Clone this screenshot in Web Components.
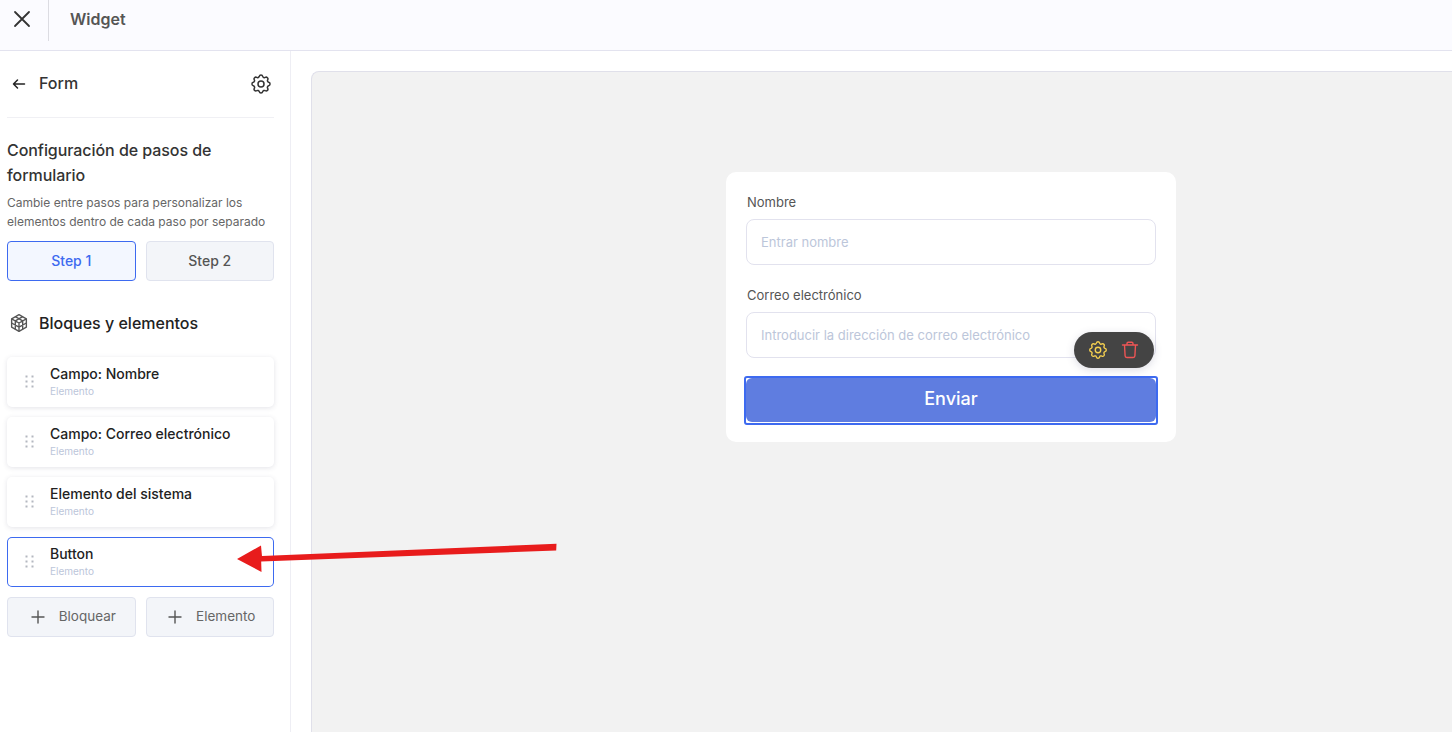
<!DOCTYPE html>
<html lang="es"><head><meta charset="utf-8"><title>Widget</title>
<style>
html,body{margin:0;height:100%;overflow:hidden;background:#fff;font-family:Inter,"Liberation Sans",sans-serif}
</style></head>
<body>
<app-shell></app-shell>
<script>
function def(name, html){
  customElements.define(name, class extends HTMLElement{
    constructor(){super();this.attachShadow({mode:'open'}).innerHTML=typeof html==='function'?html(this):html;}
  });
}
const GEAR='<path d="M10.3 4.3c.4-1.8 3-1.8 3.4 0a1.7 1.7 0 0 0 2.6 1.1c1.5-.9 3.3.8 2.4 2.4a1.7 1.7 0 0 0 1 2.5c1.8.4 1.8 3 0 3.4a1.7 1.7 0 0 0-1 2.6c.9 1.5-.9 3.3-2.4 2.4a1.7 1.7 0 0 0-2.6 1c-.4 1.8-3 1.8-3.4 0a1.7 1.7 0 0 0-2.6-1c-1.5.9-3.3-.9-2.4-2.4a1.7 1.7 0 0 0-1-2.6c-1.8-.4-1.8-3 0-3.4a1.7 1.7 0 0 0 1-2.5c-.9-1.6.9-3.3 2.4-2.4 1 .6 2.3.1 2.6-1.1z"/><circle cx="12" cy="12" r="3"/>';
def('top-bar',`<style>
:host{display:flex;align-items:stretch;height:50px;background:#fbfbff;border-bottom:1px solid #e3e3ef;box-sizing:content-box}
.x{width:48px;height:41px;border-right:1px solid #dcdce2;display:flex;align-items:center;justify-content:center;box-sizing:content-box}
.x svg{margin-top:-3px;margin-left:-4px}
.t{margin-left:21px;font-size:16px;font-weight:600;color:#555;line-height:39px}
</style><div class="x"><svg width="24" height="24" viewBox="0 0 24 24" fill="none" stroke="#333" stroke-width="1.8" stroke-linecap="round"><path d="M5 5l14 14M19 5L5 19"/></svg></div><div class="t">Widget</div>`);

def('form-head',`<style>
:host{display:flex;align-items:center;height:67px;padding-bottom:1px;border-bottom:1px solid #f0f0f4;box-sizing:border-box}
svg.a{margin-left:4px;margin-right:12px}
.t{flex:1;font-size:16px;font-weight:500;color:#333;margin-bottom:2px}
svg.g{margin-right:1px}
</style><svg class="a" width="16" height="16" viewBox="0 0 16 16" fill="none" stroke="#222" stroke-width="1.5" stroke-linecap="round" stroke-linejoin="round"><path d="M13.500 8h-11M6.500 4l-4 4 4 4"/></svg><span class="t">Form</span><svg class="g" width="24" height="24" viewBox="0 0 24 24" fill="none" stroke="#333" stroke-width="1.5">${GEAR}</svg>`);

def('side-button',el=>`<style>
:host{display:flex;align-items:center;justify-content:center;flex:1;height:40px;box-sizing:border-box;border-radius:4px;border:1px solid #e0e3ee;background:#f3f5f9;color:#555;font-size:14px;font-weight:500;padding-bottom:2px}
:host([active]){background:#f3f7ff;border-color:#3d6af0;color:#3d6af0}
:host([plain]){font-weight:400;color:#666;font-size:13.500px;padding-left:4px}
svg{margin-right:14px;margin-top:2px}
</style>${el.hasAttribute('plain')?'<svg width="14" height="14" viewBox="0 0 14 14" fill="none" stroke="#555" stroke-width="1.4" stroke-linecap="round"><path d="M7 1v12M1 7h12"/></svg>':''}<slot></slot>`);

def('element-card',`<style>
:host{display:flex;align-items:center;height:50px;box-sizing:border-box;background:#fff;border-radius:5px;box-shadow:0 1px 5px rgba(60,60,90,.14)}
:host([selected]){box-shadow:inset 0 0 0 1px #3d6af0}
.d{width:43px;display:flex;justify-content:center;flex:none}
.d svg{margin-left:3px}
.n{font-size:14px;font-weight:500;color:#222;line-height:17px}
.s{font-size:10px;color:#bcc6da;line-height:17px;margin-top:1px}
.w{margin-top:1px}
</style><div class="d"><svg width="10" height="14" viewBox="0 0 10 14" fill="#b4b7c0"><rect x="0.500" y="0.500" width="2" height="2"/><rect x="6.500" y="0.500" width="2" height="2"/><rect x="0.500" y="5.500" width="2" height="2"/><rect x="6.500" y="5.500" width="2" height="2"/><rect x="0.500" y="10.500" width="2" height="2"/><rect x="6.500" y="10.500" width="2" height="2"/></svg></div><div class="w"><div class="n"><slot></slot></div><div class="s">Elemento</div></div>`);

def('side-bar',`<style>
:host{display:block;width:291px;flex:none;box-sizing:border-box;border-right:1px solid #eeeef4;padding:0 16px 0 7px;background:#fff}
h2{margin:20px 0 0;font-size:16px;font-weight:500;line-height:25px;color:#333;letter-spacing:-.06px}
p{margin:5px 0 0;font-size:12px;line-height:19px;color:#666}
.row{display:flex;gap:10px}
.steps{margin-top:10px}
.bt{display:flex;align-items:center;margin-top:30px;height:24px;font-size:16px;font-weight:500;color:#222}
.bt svg{margin:0 10px 0 2px}
.list{display:flex;flex-direction:column;gap:10px;margin-top:22px}
.add{margin-top:10px}
</style>
<form-head></form-head>
<h2>Configuración de pasos de formulario</h2>
<p>Cambie entre pasos para personalizar los elementos dentro de cada paso por separado</p>
<div class="row steps"><side-button active>Step 1</side-button><side-button>Step 2</side-button></div>
<div class="bt"><svg width="20" height="20" viewBox="0 0 19 19" fill="none" stroke="#555" stroke-width="1.300" stroke-linejoin="round"><path d="M9.500 1.500l7 4v8l-7 4-7-4v-8z"/><path d="M2.500 5.500l7 4 7-4M9.500 9.500v8M6 3.500l7 4v8M13 3.500l-7 4v8M2.500 9.500l7 4 7-4"/></svg>Bloques y elementos</div>
<div class="list">
<element-card>Campo: Nombre</element-card>
<element-card>Campo: Correo electrónico</element-card>
<element-card>Elemento del sistema</element-card>
<element-card selected>Button</element-card>
</div>
<div class="row add"><side-button plain>Bloquear</side-button><side-button plain>Elemento</side-button></div>`);

def('form-field',el=>`<style>
:host{display:block;margin-bottom:21px}
label{display:block;font-size:13px;line-height:18px;color:#555;margin:0 0 8px 1px}
.i{height:46px;box-sizing:border-box;border:1px solid #e2e2ee;border-radius:8px;padding:0 14px;display:flex;align-items:center;font-size:13px;color:#bcc6da;background:#fff;white-space:nowrap;overflow:hidden}
</style><label>${el.getAttribute('label')}</label><div class="i">${el.getAttribute('placeholder')}</div>`);

def('element-toolbar',`<style>
:host{position:absolute;right:22px;top:160px;width:80px;height:36px;border-radius:18px;background:#444;display:flex;align-items:center;justify-content:center;gap:11px;box-sizing:border-box;padding-right:1px;box-shadow:0 2px 8px rgba(80,80,120,.2)}
svg{display:block}
</style><svg width="22" height="22" viewBox="0 0 24 24" fill="none" stroke="#f5d050" stroke-width="1.500">${GEAR}</svg><svg width="20" height="20" viewBox="0 0 20 20" fill="none" stroke="#ee5555" stroke-width="1.400" stroke-linecap="round" stroke-linejoin="round"><path d="M2.500 5h15M7 5V3.500c0-.8.6-1.200 1.200-1.200h3.600c.6 0 1.200.4 1.200 1.200V5M4.500 5l.6 10.800c0 1 .8 1.700 1.700 1.700h6.400c.9 0 1.700-.7 1.700-1.700L15.500 5"/></svg>`);

def('form-card',`<style>
:host{display:block;position:relative;width:450px;height:270px;box-sizing:border-box;background:#fff;border-radius:10px;padding:21px 20px 0}
.b{height:49px;margin:-3px -2px 0;box-sizing:border-box;border:2px solid #3d6af0;border-radius:3px;padding:0 0 1px}
.b div{height:100%;box-sizing:border-box;padding-bottom:3px;background:#5f7de0;border-radius:6px;color:#fff;font-size:18px;font-weight:500;display:flex;align-items:center;justify-content:center}
</style><form-field label="Nombre" placeholder="Entrar nombre"></form-field>
<form-field label="Correo electrónico" placeholder="Introducir la dirección de correo electrónico"></form-field>
<div class="b"><div>Enviar</div></div><element-toolbar></element-toolbar>`);

def('canvas-area',`<style>
:host{display:block;flex:1;margin:20px 0 0 20px;background:#f2f2f2;border:1px solid #e0e0ea;border-right:0;border-bottom:0;border-top-left-radius:8px;padding-top:100px;box-sizing:border-box}
form-card{margin-left:414px}
</style><form-card></form-card>`);

def('red-arrow',`<style>
:host{position:absolute;left:0;top:0;width:1452px;height:732px;pointer-events:none}
</style><svg width="1452" height="732" viewBox="0 0 1452 732"><path d="M556.500 543.800L262 556l-.4-4-.6-6.500-24 13.500 24.500 13-.2-6.700-.1-3.800 295-11z" fill="#e81c1c"/></svg>`);

def('app-shell',`<style>
:host{display:flex;flex-direction:column;height:732px;position:relative;overflow:hidden}
.m{display:flex;flex:1;min-height:0}
</style><top-bar></top-bar><div class="m"><side-bar></side-bar><canvas-area></canvas-area></div><red-arrow></red-arrow>`);
</script>
</body></html>
